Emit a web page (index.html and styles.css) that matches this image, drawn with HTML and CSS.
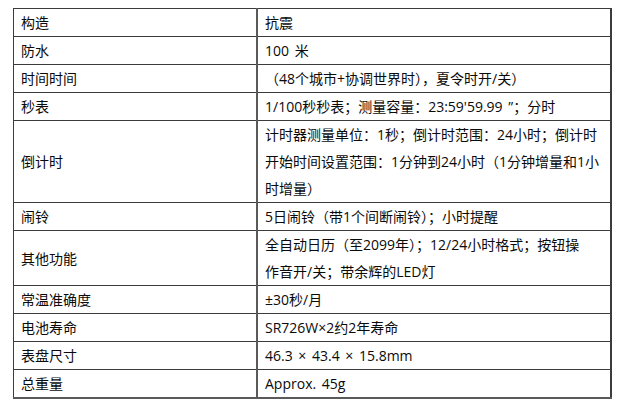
FILE: index.html
```html
<!DOCTYPE html>
<html lang="zh-CN">
<head>
<meta charset="utf-8">
<title>规格</title>
<link rel="stylesheet" href="styles.css">
</head>
<body>
<table class="spec">
  <tbody>
    <tr><td class="k">构造</td><td class="v">抗震</td></tr>
    <tr><td class="k">防水</td><td class="v">100 米</td></tr>
    <tr><td class="k">时间时间</td><td class="v">（48个城市+协调世界时），夏令时开/关）</td></tr>
    <tr><td class="k">秒表</td><td class="v">1/100秒秒表；测量容量：23:59'59.99 ”；分时</td></tr>
    <tr><td class="k">倒计时</td><td class="v">计时器测量单位：1秒；倒计时范围：24小时；倒计时<br>开始时间设置范围：1分钟到24小时（1分钟增量和1小<br>时增量）</td></tr>
    <tr><td class="k">闹铃</td><td class="v">5日闹铃（带1个间断闹铃）；小时提醒</td></tr>
    <tr><td class="k">其他功能</td><td class="v">全自动日历（至2099年）；12/24小时格式；按钮操<br>作音开/关；带余辉的LED灯</td></tr>
    <tr><td class="k">常温准确度</td><td class="v">±30秒/月</td></tr>
    <tr><td class="k">电池寿命</td><td class="v">SR726W×2约2年寿命</td></tr>
    <tr><td class="k">表盘尺寸</td><td class="v">46.3 × 43.4 × 15.8mm</td></tr>
    <tr><td class="k">总重量</td><td class="v">Approx. 45g</td></tr>
  </tbody>
</table>
</body>
</html>
```
FILE: styles.css
```css
html, body {
  margin: 0;
  padding: 0;
  background: #ffffff;
}
body {
  padding: 8px 0 0 13px;
  font-family: "Open Sans", "Noto Sans CJK SC", sans-serif;
  font-size: 14px;
  color: #0a0a0a;
}
.spec {
  border-collapse: collapse;
  width: 599px;
  table-layout: fixed;
}
.spec td {
  border: 1px solid #3c3c3c;
  padding: 0 7px;
  line-height: 27px;
  vertical-align: middle;
  white-space: nowrap;
}
.spec td.k {
  width: 228px;
}
.spec td.v {
  border-left: 2px solid #5a5a5a;
  word-spacing: 2px;
}
.spec tr:last-child td {
  border-bottom: 2px solid #5a5a5a;
}
.spec td:last-child {
  border-right: 2px solid #3c3c3c;
}
```
